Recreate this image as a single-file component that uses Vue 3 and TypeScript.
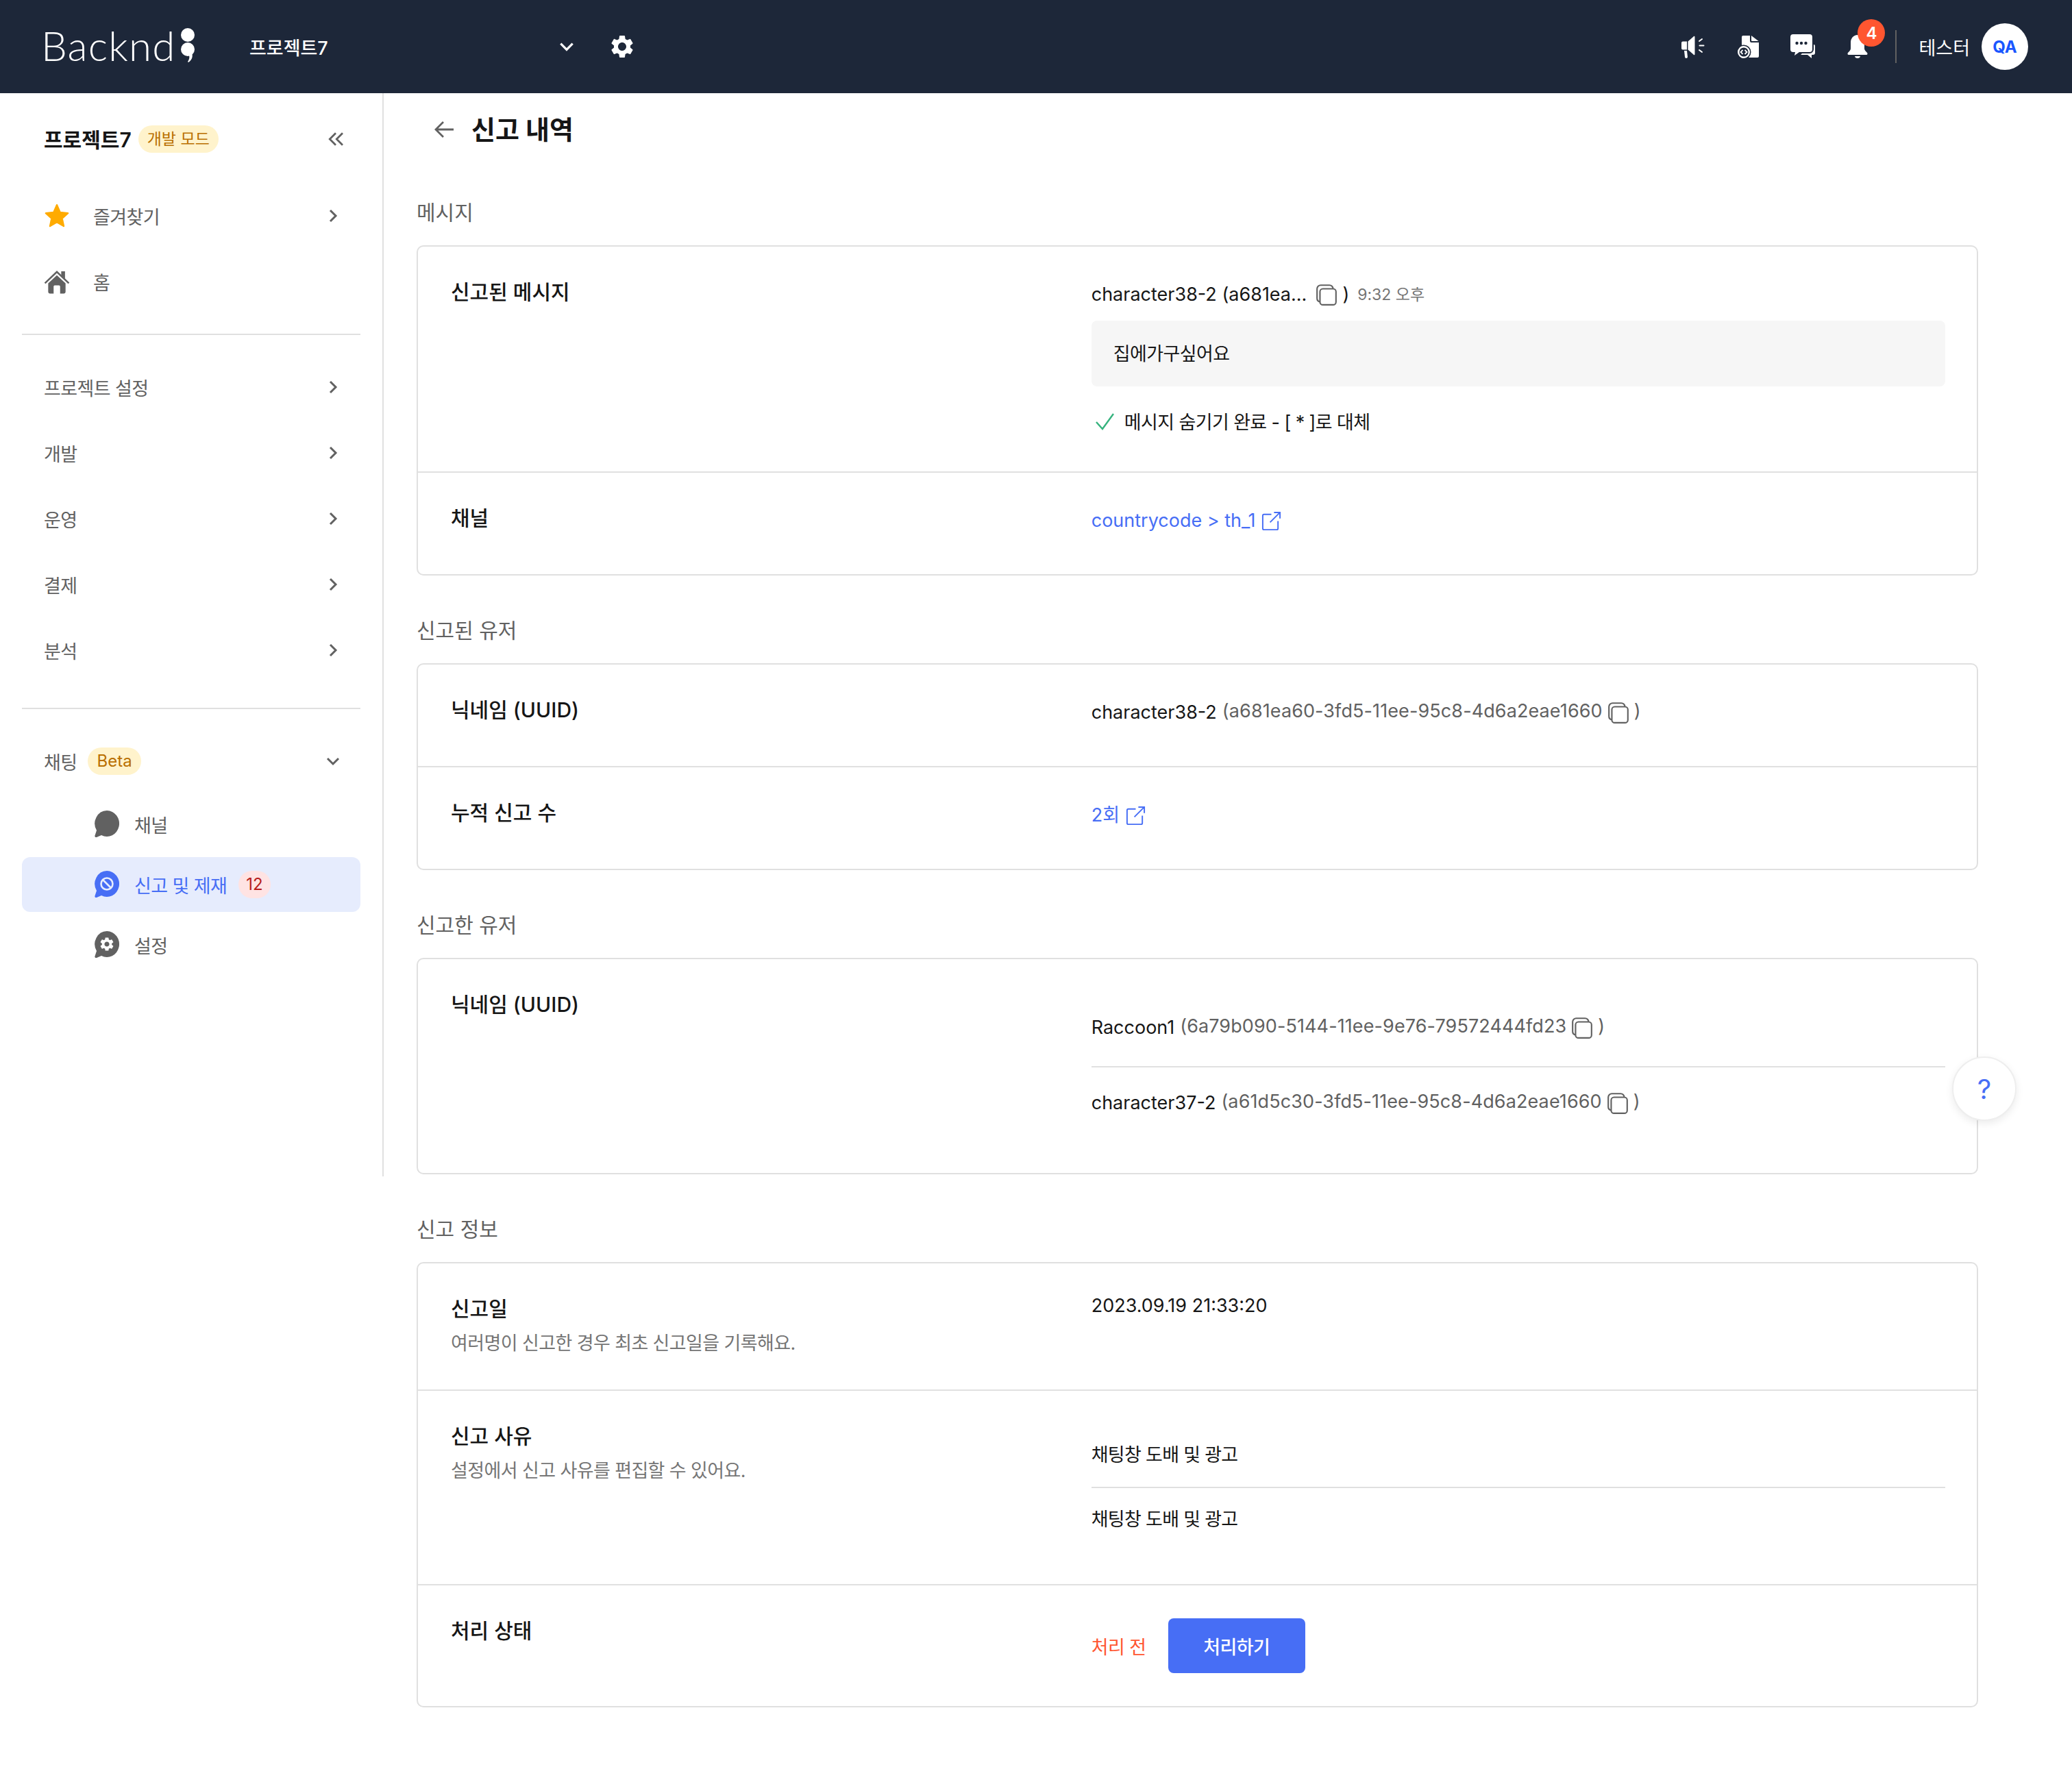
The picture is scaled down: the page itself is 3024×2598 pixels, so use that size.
<template>
  <div class="page">
    <header class="topbar">
      <div class="logo">
        <span class="logo__word">Backnd</span>
        <svg class="logo__mark" viewBox="0 0 24 50" aria-hidden="true">
          <circle cx="12" cy="10" r="10" fill="#fff" />
          <circle cx="12" cy="31" r="10" fill="#fff" />
          <path d="M18 37c2 4 0 10-5 13l-1-1c2-3 3-6 2-9z" fill="#fff" />
        </svg>
      </div>
      <div class="project-select">
        <span>프로젝트7</span>
        <svg viewBox="0 0 24 24" class="project-select__chevron"><path d="M4 8l8 8 8-8" /></svg>
      </div>
      <svg class="topbar__gear" viewBox="0 0 24 24"><path :d="GEAR" fill="#fff" /></svg>

      <div class="topbar__right">
        <svg class="tool" viewBox="0 0 36 36" fill="#fff">
          <path d="M1 12.500a2 2 0 0 1 2-2h6v12H3a2 2 0 0 1-2-2zM10.500 10.500l8-7a1 1 0 0 1 2 .5v25a1 1 0 0 1-2 .5l-8-7zM5 24h4l1 9a2 2 0 0 1-4 0z" />
          <path d="M27 10l4-3M27.500 16.500h6M27 23l4 3" stroke="#fff" stroke-width="2" stroke-linecap="round" />
        </svg>
        <svg class="tool" viewBox="0 0 36 36" fill="#fff">
          <path d="M11 2h10v8a2 2 0 0 0 2 2h11v20a2 2 0 0 1-2 2H11a2 2 0 0 1-2-2V4a2 2 0 0 1 2-2z" />
          <path d="M23 2l10.500 8H24a1 1 0 0 1-1-1z" />
          <circle cx="12" cy="26" r="10.500" fill="#1d2739" />
          <circle cx="12" cy="26" r="7.800" fill="#1d2739" stroke="#fff" stroke-width="2.400" />
          <path d="M10.500 23l-3 3 3 3M13.500 23l3 3-3 3" fill="none" stroke="#fff" stroke-width="1.800" />
        </svg>
        <svg class="tool" viewBox="0 0 36 36" fill="#fff">
          <path d="M4 0h24a4 4 0 0 1 4 4v18a4 4 0 0 1-4 4H13l-7 5 1-5H4a4 4 0 0 1-4-4V4a4 4 0 0 1 4-4z" />
          <path d="M34 15a2 2 0 0 1 2 2v10a3 3 0 0 1-3 3h-2v5l-6-5H15l2-2h11a6 6 0 0 0 6-6z" />
          <circle cx="9.500" cy="13" r="2.200" fill="#1d2739" />
          <circle cx="16" cy="13" r="2.200" fill="#1d2739" />
          <circle cx="22.500" cy="13" r="2.200" fill="#1d2739" />
        </svg>
        <div class="bell">
          <svg class="tool" viewBox="0 0 36 36" fill="#fff">
            <path d="M18 1c6 0 10 5 10 11v9c0 2 2 4 4 6 1 1 .5 3-1 3H5c-1.500 0-2-2-1-3 2-2 4-4 4-6v-9C8 6 12 1 18 1zM14 32h8c0 2-2 3-4 3s-4-1-4-3z" />
          </svg>
          <span class="bell__count">4</span>
        </div>
        <span class="topbar__divider" />
        <span class="topbar__user">테스터</span>
        <span class="avatar">QA</span>
      </div>
    </header>

    <div class="body">
      <aside class="sidebar">
        <div class="sidebar__project">
          <strong>프로젝트7</strong>
          <span class="pill">개발 모드</span>
          <svg class="collapse" viewBox="0 0 24 24"><path d="M12 5l-7 7 7 7M20 5l-7 7 7 7" /></svg>
        </div>

        <a class="nav-item">
          <svg class="nav-item__icon" viewBox="0 0 24 24"><path fill="#ffab00" stroke="#ffab00" stroke-width="1.500" stroke-linejoin="round" d="M12 2l3 6.800 7.200.8-5.400 4.800 1.500 7.100-6.300-3.700-6.300 3.700 1.500-7.100-5.400-4.800 7.200-.8z" /></svg>
          <span>즐겨찾기</span>
          <svg class="chev" viewBox="0 0 24 24"><path d="M8 4l8 8-8 8" /></svg>
        </a>
        <a class="nav-item">
          <svg class="nav-item__icon" viewBox="0 0 24 24" fill="#616161">
            <path d="M1 13.500L12 3l11 10.500" fill="none" stroke="#616161" stroke-width="1.600" />
            <path d="M16 2.500h3.500v7L16 6.200z" />
            <path d="M12 6.200l8 7.300v8a1.500 1.500 0 0 1-1.500 1.500H15v-6.500a1 1 0 0 0-1-1h-4a1 1 0 0 0-1 1V23H5.500A1.500 1.500 0 0 1 4 21.500v-8z" />
          </svg>
          <span>홈</span>
        </a>

        <hr class="sidebar__rule" />

        <a v-for="item in groups" :key="item" class="nav-item">
          <span>{{ item }}</span>
          <svg class="chev" viewBox="0 0 24 24"><path d="M8 4l8 8-8 8" /></svg>
        </a>

        <hr class="sidebar__rule sidebar__rule--chat" />

        <a class="nav-item nav-item--chat">
          <span>채팅</span>
          <span class="pill pill--beta">Beta</span>
          <svg class="chev" viewBox="0 0 24 24"><path d="M4 8l8 8 8-8" /></svg>
        </a>

        <a class="sub-item">
          <svg class="sub-item__icon" viewBox="0 0 36 40"><path :d="BUBBLE" fill="#616161" /></svg>
          <span>채널</span>
        </a>
        <a class="sub-item sub-item--active">
          <svg class="sub-item__icon" viewBox="0 0 36 40">
            <path :d="BUBBLE" fill="#476ef5" />
            <circle cx="18" cy="19" r="8.500" fill="none" stroke="#e6ecfd" stroke-width="2.600" />
            <path d="M12 13l12 12" stroke="#e6ecfd" stroke-width="2.600" />
          </svg>
          <span>신고 및 제재</span>
          <span class="count">12</span>
        </a>
        <a class="sub-item">
          <svg class="sub-item__icon" viewBox="0 0 36 40">
            <path :d="BUBBLE" fill="#616161" />
            <svg x="6" y="7" width="24" height="24" viewBox="0 0 24 24"><path :d="GEAR" fill="#fff" /></svg>
          </svg>
          <span>설정</span>
        </a>
      </aside>

      <main class="content">
        <div class="title-row">
          <svg class="title-row__back" viewBox="0 0 32 32"><path d="M30 16H4M15 5L4 16l11 11" /></svg>
          <h1>신고 내역</h1>
        </div>

        <h2 class="section-label">메시지</h2>
        <section class="card">
          <div class="row">
            <h3 class="row__label">신고된 메시지</h3>
            <div class="row__value">
              <div class="line line--head">
                character38-2 (a681ea...
                <svg class="copy" viewBox="0 0 32 32"><path :d="COPY" /></svg>
                <span>)</span>
                <span class="line__time">9:32 오후</span>
              </div>
              <div class="message">집에가구싶어요</div>
              <div class="hidden-note">
                <svg viewBox="0 0 32 32"><path d="M3 17l9 10L28 5" /></svg>
                메시지 숨기기 완료 - [ * ]로 대체
              </div>
            </div>
          </div>
          <div class="row">
            <h3 class="row__label">채널</h3>
            <div class="row__value">
              <a class="line line--link">
                countrycode &gt; th_1
                <svg class="external" viewBox="0 0 32 32"><path :d="EXTERNAL" /></svg>
              </a>
            </div>
          </div>
        </section>

        <h2 class="section-label">신고된 유저</h2>
        <section class="card">
          <div class="row">
            <h3 class="row__label">닉네임 (UUID)</h3>
            <div class="row__value">
              <div class="line">
                character38-2
                <span class="line__uuid">(a681ea60-3fd5-11ee-95c8-4d6a2eae1660</span>
                <svg class="copy" viewBox="0 0 32 32"><path :d="COPY" /></svg>
                <span class="line__uuid">)</span>
              </div>
            </div>
          </div>
          <div class="row">
            <h3 class="row__label">누적 신고 수</h3>
            <div class="row__value">
              <a class="line line--link">
                2회
                <svg class="external" viewBox="0 0 32 32"><path :d="EXTERNAL" /></svg>
              </a>
            </div>
          </div>
        </section>

        <h2 class="section-label">신고한 유저</h2>
        <section class="card">
          <div class="row">
            <h3 class="row__label">닉네임 (UUID)</h3>
            <ul class="row__value list list--users">
              <li v-for="user in reporters" :key="user.uuid" class="line">
                {{ user.name }}
                <span class="line__uuid">({{ user.uuid }}</span>
                <svg class="copy" viewBox="0 0 32 32"><path :d="COPY" /></svg>
                <span class="line__uuid">)</span>
              </li>
            </ul>
          </div>
        </section>

        <h2 class="section-label">신고 정보</h2>
        <section class="card">
          <div class="row">
            <div>
              <h3 class="row__label">신고일</h3>
              <p class="row__hint">여러명이 신고한 경우 최초 신고일을 기록해요.</p>
            </div>
            <div class="row__value">
              <div class="date">2023.09.19 21:33:20</div>
            </div>
          </div>
          <div class="row">
            <div>
              <h3 class="row__label">신고 사유</h3>
              <p class="row__hint">설정에서 신고 사유를 편집할 수 있어요.</p>
            </div>
            <ul class="row__value list list--reasons">
              <li v-for="(reason, i) in reasons" :key="i" class="line">{{ reason }}</li>
            </ul>
          </div>
          <div class="row">
            <h3 class="row__label">처리 상태</h3>
            <div class="row__value status">
              <span class="status__text">처리 전</span>
              <button type="button" class="status__btn">처리하기</button>
            </div>
          </div>
        </section>
      </main>
    </div>

    <button type="button" class="help">?</button>
  </div>
</template>

<script setup lang="ts">
const GEAR =
  'M19.14 12.94c.04-.3.06-.61.06-.94 0-.32-.02-.64-.07-.94l2.03-1.58a.49.49 0 0 0 .12-.61l-1.92-3.32a.488.488 0 0 0-.59-.22l-2.39.96c-.5-.38-1.03-.7-1.62-.94l-.36-2.54a.484.484 0 0 0-.48-.41h-3.84c-.24 0-.43.17-.47.41l-.36 2.54c-.59.24-1.13.57-1.62.94l-2.39-.96c-.22-.08-.47 0-.59.22L2.74 8.87c-.12.21-.08.47.12.61l2.03 1.58c-.05.3-.09.63-.09.94s.02.64.07.94l-2.03 1.58a.49.49 0 0 0-.12.61l1.92 3.32c.12.22.37.29.59.22l2.39-.96c.5.38 1.03.7 1.62.94l.36 2.54c.05.24.24.41.48.41h3.84c.24 0 .44-.17.47-.41l.36-2.54c.59-.24 1.13-.56 1.62-.94l2.39.96c.22.08.47 0 .59-.22l1.92-3.32c.12-.22.07-.47-.12-.61l-2.01-1.58zM12 15.6c-1.98 0-3.6-1.62-3.6-3.6s1.62-3.6 3.6-3.6 3.6 1.62 3.6 3.6-1.62 3.6-3.6 3.6z'
const BUBBLE = 'M18 0a18 19 0 1 1-8 36l-7 3c-2 .5-3-1-2.500-2.500L3 29A18 19 0 0 1 18 0z'
const COPY =
  'M11 8h14a4 4 0 0 1 4 4v14a4 4 0 0 1-4 4H11a4 4 0 0 1-4-4V12a4 4 0 0 1 4-4zM25 8a5 5 0 0 0-5-5H8a5 5 0 0 0-5 5v13a5 5 0 0 0 4 5'
const EXTERNAL = 'M16 6H5a2 2 0 0 0-2 2v19a2 2 0 0 0 2 2h19a2 2 0 0 0 2-2V16M14 18L29 3M20 3h9v9'

const groups: string[] = ['프로젝트 설정', '개발', '운영', '결제', '분석']

const reporters = [
  { name: 'Raccoon1', uuid: '6a79b090-5144-11ee-9e76-79572444fd23' },
  { name: 'character37-2', uuid: 'a61d5c30-3fd5-11ee-95c8-4d6a2eae1660' },
]

const reasons: string[] = ['채팅창 도배 및 광고', '채팅창 도배 및 광고']
</script>

<style>
body {
  background: #fff;
}
</style>

<style scoped>
.page {
  position: relative;
  min-height: 2598px;
  background: #fff;
  color: #161616;
  font-family: Inter, "Noto Sans CJK KR", sans-serif;
  font-size: 27px;
  letter-spacing: -0.6px;
}

h1,
h2,
h3,
p,
ul {
  margin: 0;
  padding: 0;
}

ul {
  list-style: none;
}

.topbar {
  height: 136px;
  background: #1d2739;
  color: #fff;
  display: flex;
  align-items: center;
  padding: 0 64px 0 60px;
  letter-spacing: 0;
}

.logo {
  display: flex;
  align-items: center;
  width: 304px;
  flex: none;
  gap: 5px;
  transform: translateY(-2px);
}

.logo__word {
  font-family: Lato, sans-serif;
  font-weight: 300;
  font-size: 60px;
  line-height: 1;
  letter-spacing: 1.200px;
}

.logo__mark {
  width: 24px;
  height: 50px;
}

.project-select {
  display: flex;
  align-items: center;
  justify-content: space-between;
  width: 476px;
  flex: none;
  font-weight: 500;
  font-size: 27px;
}

.project-select__chevron {
  width: 26px;
  height: 26px;
  fill: none;
  stroke: #fff;
  stroke-width: 3;
}

.topbar__gear {
  width: 40px;
  height: 40px;
  margin-left: 48px;
}

.topbar__right {
  margin-left: auto;
  display: flex;
  align-items: center;
  gap: 44px;
}

.tool {
  width: 36px;
  height: 36px;
  display: block;
}

.bell {
  position: relative;
}

.bell__count {
  position: absolute;
  top: -22px;
  left: 18px;
  width: 40px;
  height: 40px;
  border-radius: 50%;
  background: #ff5630;
  color: #fff;
  font-size: 24px;
  font-weight: 600;
  display: grid;
  place-items: center;
}

.topbar__divider {
  width: 2px;
  height: 48px;
  background: #616161;
  margin-left: -7px;
}

.topbar__user {
  font-size: 27px;
  margin-left: -12px;
}

.avatar {
  width: 68px;
  height: 68px;
  border-radius: 50%;
  background: #fff;
  color: #1a56ff;
  font-size: 24px;
  font-weight: 700;
  display: grid;
  place-items: center;
  margin-left: -27px;
}

.body {
  display: flex;
  align-items: flex-start;
}

.sidebar {
  width: 560px;
  height: 1581px;
  flex: none;
  border-right: 2px solid #e0e0e0;
  padding: 40px 32px 0;
  box-sizing: border-box;
  color: #616161;
}

.sidebar__project {
  display: flex;
  align-items: center;
  height: 54px;
  padding-left: 32px;
  margin-bottom: 37px;
  color: #161616;
  letter-spacing: 0;
}

.sidebar__project strong {
  font-size: 30px;
  font-weight: 600;
  margin-top: -2px;
}

.pill {
  background: #fff3cc;
  color: #b96f00;
  font-size: 23px;
  height: 40px;
  line-height: 40px;
  padding: 0 13px;
  border-radius: 20px;
  margin-left: 10px;
  white-space: nowrap;
  letter-spacing: 0;
}

.collapse {
  width: 30px;
  height: 30px;
  margin-left: auto;
  margin-right: 21px;
  fill: none;
  stroke: #616161;
  stroke-width: 2.200;
}

.nav-item {
  display: flex;
  align-items: center;
  height: 96px;
  padding: 0 28px 0 32px;
}

.nav-item__icon {
  width: 38px;
  height: 38px;
  margin-right: 34px;
  flex: none;
}

.chev {
  width: 24px;
  height: 24px;
  margin-left: auto;
  fill: none;
  stroke: #616161;
  stroke-width: 3;
}

.nav-item--chat .pill {
  margin-left: 16px;
}

.pill--beta {
  font-size: 24px;
}

.sidebar__rule {
  border: 0;
  border-top: 2px solid #e0e0e0;
  margin: 28px 0;
}

.sidebar__rule--chat {
  margin-top: 36px;
}

.sub-item {
  display: flex;
  align-items: center;
  height: 80px;
  margin-bottom: 8px;
  padding-left: 106px;
  border-radius: 12px;
}

.nav-item--chat + .sub-item {
  margin-top: 4px;
}

.sub-item__icon {
  width: 36px;
  height: 40px;
  margin-right: 22px;
  flex: none;
}

.sub-item--active {
  background: #e6ecfd;
  color: #476ef5;
}

.count {
  background: #ffe3e3;
  color: #b71c1c;
  font-size: 24px;
  height: 40px;
  line-height: 40px;
  padding: 0 11px;
  border-radius: 20px;
  margin-left: 17px;
  letter-spacing: 0;
}

.content {
  flex: 1;
  padding: 0 137px 104px 48px;
  min-width: 0;
}

.title-row {
  height: 106px;
  display: flex;
  align-items: center;
  margin-bottom: 48px;
  padding-left: 24px;
}

.title-row__back {
  width: 32px;
  height: 32px;
  margin-right: 24px;
  fill: none;
  stroke: #616161;
  stroke-width: 2.800;
}

.title-row h1 {
  font-size: 38px;
  font-weight: 700;
  line-height: 50px;
  letter-spacing: 0;
}

.section-label {
  font-size: 30px;
  font-weight: 400;
  line-height: 40px;
  color: #616161;
  margin-bottom: 28px;
  letter-spacing: 0;
}

.card {
  border: 2px solid #e0e0e0;
  border-radius: 10px;
  margin-bottom: 60px;
}

.card:last-child {
  margin-bottom: 0;
}

.row {
  display: grid;
  grid-template-columns: 3fr 4fr;
  padding: 48px 46px 48px 48px;
  border-bottom: 2px solid #e0e0e0;
}

.row:last-child {
  border-bottom: 0;
}

.row__label {
  font-size: 30px;
  font-weight: 500;
  line-height: 36px;
  letter-spacing: 0;
}

.row__hint {
  line-height: 38px;
  color: #757575;
  margin-top: 14px;
}

.row__value {
  min-height: 52px;
}

.line {
  display: flex;
  align-items: center;
  gap: 8px;
  height: 44px;
  line-height: 44px;
  white-space: nowrap;
  letter-spacing: 0;
}

.line__uuid {
  color: #616161;
  letter-spacing: 0.1px;
  margin-bottom: 4px;
}

.line__time {
  color: #757575;
  font-size: 23px;
  margin-left: 4px;
}

.line--head .copy {
  margin-left: 4px;
}

.line--link {
  color: #476ef5;
  margin-bottom: 8px;
}

.copy {
  width: 34px;
  height: 34px;
  margin: 0 -2px;
  fill: none;
  stroke: #616161;
  stroke-width: 2;
}

.external {
  width: 31px;
  height: 31px;
  fill: none;
  stroke: #476ef5;
  stroke-width: 2;
}

.message {
  margin-top: 16px;
  height: 96px;
  display: flex;
  align-items: center;
  padding: 0 32px 4px;
  box-sizing: border-box;
  background: #f6f6f6;
  border-radius: 8px;
}

.hidden-note {
  margin-top: 25px;
  height: 51px;
  display: flex;
  align-items: center;
  gap: 12px;
  padding-left: 4px;
}

.hidden-note svg {
  width: 32px;
  height: 32px;
  fill: none;
  stroke: #36b37e;
  stroke-width: 2.400;
}

.list li + li {
  border-top: 2px solid #e0e0e0;
}

.list--users li {
  box-sizing: content-box;
  padding: 30px 0 34px;
}

.list--users li:last-child {
  padding-bottom: 32px;
}

.list--reasons li {
  box-sizing: content-box;
  padding: 24px 0 24px;
  letter-spacing: -0.7px;
}

.date {
  line-height: 28px;
  letter-spacing: 0;
}

.status {
  display: flex;
  align-items: center;
  gap: 32px;
}

.status__text {
  color: #ff5630;
  min-width: 80px;
}

.status__btn {
  width: 200px;
  height: 80px;
  border: 0;
  border-radius: 8px;
  background: #476ef5;
  color: #fff;
  font: inherit;
  font-weight: 500;
  letter-spacing: inherit;
}

.help {
  position: absolute;
  left: 2849px;
  top: 1542px;
  width: 94px;
  height: 94px;
  border-radius: 50%;
  border: 2px solid #eeeeee;
  background: #fff;
  color: #476ef5;
  font-family: Inter, sans-serif;
  font-size: 40px;
  box-shadow: 0 4px 12px rgba(0, 0, 0, 0.08);
}
</style>
